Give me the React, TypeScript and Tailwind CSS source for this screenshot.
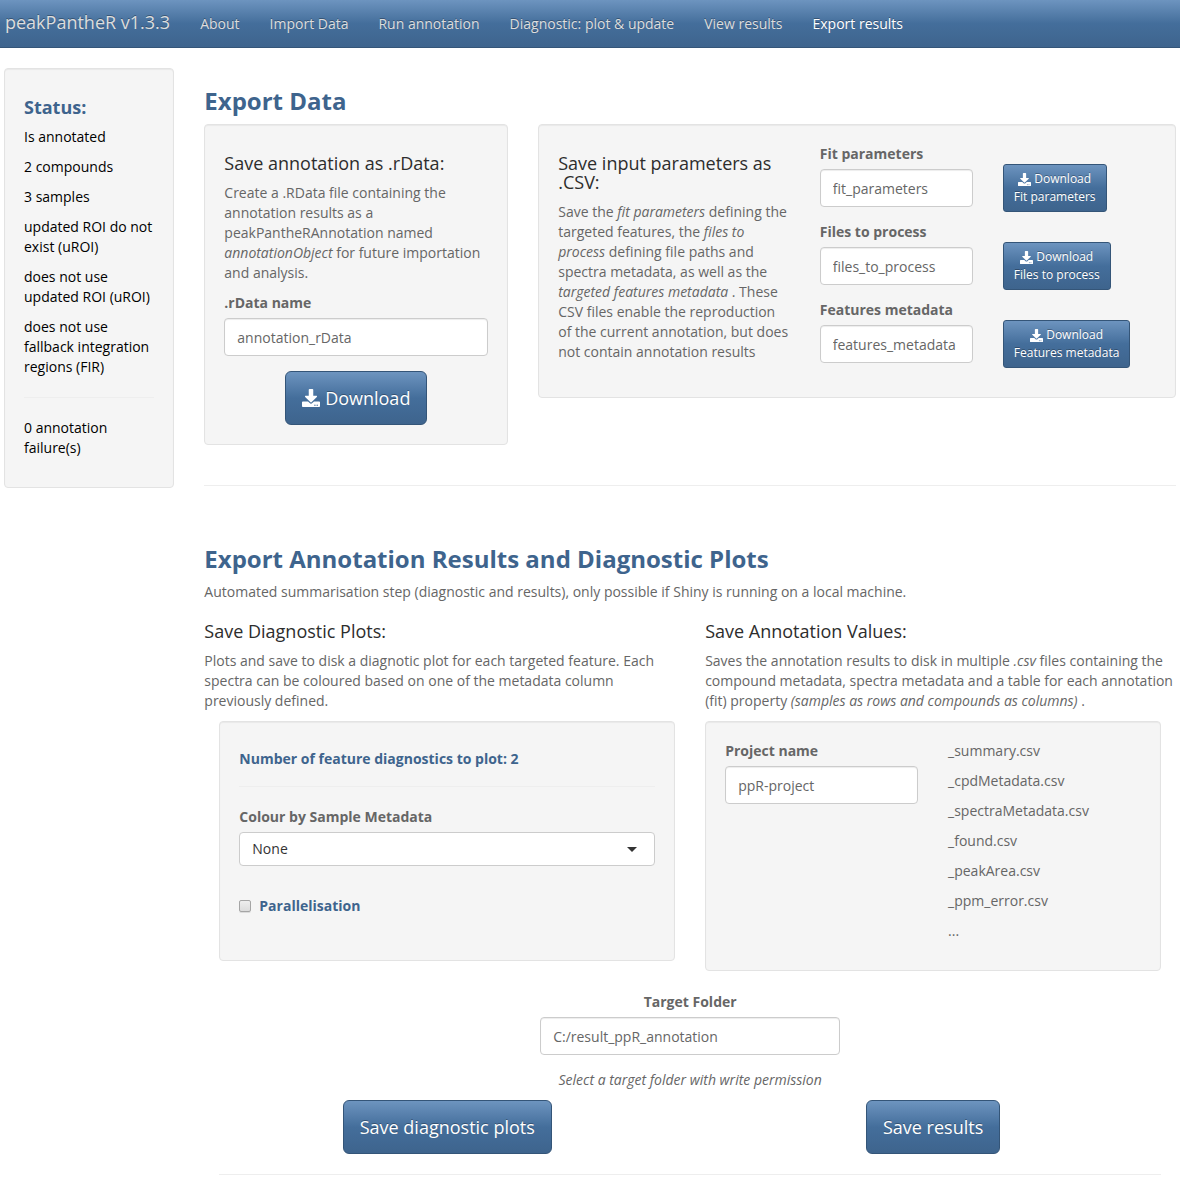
import { useId, type ReactNode } from "react";
import { FaDownload } from "react-icons/fa";

const gradient =
  "bg-[linear-gradient(#6d94bf,#446e9b_50%,#3e648d)] [text-shadow:0_-1px_0_rgba(0,0,0,0.3)]";

const navItems = [
  "About",
  "Import Data",
  "Run annotation",
  "Diagnostic: plot & update",
  "View results",
  "Export results",
];

const statusItems = [
  "Is annotated",
  "2 compounds",
  "3 samples",
  "updated ROI do not exist (uROI)",
  "does not use updated ROI (uROI)",
  "does not use fallback integration regions (FIR)",
];

const csvFields = [
  { label: "Fit parameters", value: "fit_parameters" },
  { label: "Files to process", value: "files_to_process" },
  { label: "Features metadata", value: "features_metadata" },
];

const outputFiles = [
  "_summary.csv",
  "_cpdMetadata.csv",
  "_spectraMetadata.csv",
  "_found.csv",
  "_peakArea.csv",
  "_ppm_error.csv",
  "...",
];

function Well({ className = "", children }: { className?: string; children: ReactNode }) {
  return (
    <div
      className={`rounded border border-[#e3e3e3] bg-[#f5f5f5] p-[19px] shadow-[inset_0_1px_1px_rgba(0,0,0,0.05)] ${className}`}
    >
      {children}
    </div>
  );
}

function SectionTitle({ children }: { children: ReactNode }) {
  return <h2 className="mb-2.5 text-2xl leading-[26px] font-bold text-[#3e648d]">{children}</h2>;
}

function SubTitle({ children }: { children: ReactNode }) {
  return <h4 className="my-2.5 text-lg leading-[19px] text-[#2d2d2d]">{children}</h4>;
}

function TextField({ label, value, className = "" }: { label: string; value: string; className?: string }) {
  const id = useId();
  return (
    <div className={`mb-[15px] ${className}`}>
      <label htmlFor={id} className="mb-[5px] block font-bold">
        {label}
      </label>
      <input
        id={id}
        type="text"
        defaultValue={value}
        className="block h-[38px] w-full rounded border border-[#cccccc] bg-white px-3 text-left text-[#666666] shadow-[inset_0_1px_1px_rgba(0,0,0,0.075)]"
      />
    </div>
  );
}

function LargeButton({ children }: { children: ReactNode }) {
  return (
    <button
      type="button"
      className={`rounded-md border border-[#345578] px-4 py-3.5 text-lg leading-6 text-white ${gradient}`}
    >
      {children}
    </button>
  );
}

export default function App() {
  return (
    <div className="min-h-screen bg-white pb-2.5 font-['Open_Sans',sans-serif] text-sm leading-5 text-[#666666]">
      <nav className={`flex h-12 items-baseline border-b border-[#345578] pl-[5px] text-[#dddddd] ${gradient}`}>
        <a href="#home" className="mr-[15px] text-lg leading-5 whitespace-nowrap">
          peakPantheR v1.3.3
        </a>
        <ul className="flex">
          {navItems.map((item) => (
            <li key={item}>
              <a
                href="#tab"
                className={`block px-[15px] pt-3.5 pb-3 whitespace-nowrap ${item === "Export results" ? "text-white" : ""}`}
              >
                {item}
              </a>
            </li>
          ))}
        </ul>
      </nav>

      <div className="mt-5 grid grid-cols-12 items-start gap-x-[30px] px-1">
        <aside className="col-span-2">
          <Well className="text-black">
            <h4 className="my-2.5 text-lg leading-[19px] font-bold text-[#3e648d]">Status:</h4>
            {statusItems.map((item) => (
              <p key={item} className="mb-2.5">
                {item}
              </p>
            ))}
            <hr className="my-5 border-[#eeeeee]" />
            <p className="mb-2.5">0 annotation failure(s)</p>
          </Well>
        </aside>

        <main className="col-span-10 pt-5">
          <SectionTitle>Export Data</SectionTitle>
          <div className="grid grid-cols-12 items-start gap-x-[30px]">
            <Well className="col-span-4">
              <SubTitle>Save annotation as .rData:</SubTitle>
              <p className="mb-2.5">
                Create a .RData file containing the annotation results as a peakPantheRAnnotation named{" "}
                <em>annotationObject</em> for future importation and analysis.
              </p>
              <TextField label=".rData name" value="annotation_rData" />
              <div className="flex justify-center">
                <LargeButton>
                  <span className="flex items-center gap-[5px]">
                    <FaDownload className="size-[18px]" />
                    Download
                  </span>
                </LargeButton>
              </div>
            </Well>

            <Well className="col-span-8">
              <div className="grid grid-cols-12 gap-x-[30px]">
                <div className="col-span-5">
                  <SubTitle>Save input parameters as .CSV:</SubTitle>
                  <p>
                    Save the <em>fit parameters</em> defining the targeted features, the <em>files to process</em>{" "}
                    defining file paths and spectra metadata, as well as the <em>targeted features metadata</em> . These
                    CSV files enable the reproduction of the current annotation, but does not contain annotation results
                  </p>
                </div>
                <div className="col-span-7">
                  {csvFields.map((field) => (
                    <div key={field.value} className="grid grid-cols-2 items-start gap-x-[30px]">
                      <TextField label={field.label} value={field.value} />
                      <button
                        type="button"
                        className={`mt-5 justify-self-start rounded-[3px] border border-[#345578] px-2.5 py-[5px] text-xs leading-[18px] whitespace-nowrap text-white ${gradient}`}
                      >
                        <span className="flex items-center justify-center gap-[3px]">
                          <FaDownload className="size-[13px]" />
                          Download
                        </span>
                        <span className="block">{field.label}</span>
                      </button>
                    </div>
                  ))}
                </div>
              </div>
            </Well>
          </div>

          <hr className="mt-10 mb-[60px] border-[#eeeeee]" />

          <SectionTitle>Export Annotation Results and Diagnostic Plots</SectionTitle>
          <p>
            Automated summarisation step (diagnostic and results), only possible if Shiny is running on a local machine.
          </p>

          <div className="mt-2.5 grid grid-cols-2 gap-x-[30px] pt-2.5">
            <div>
              <h4 className="mb-2.5 text-lg leading-[19px] text-[#2d2d2d]">Save Diagnostic Plots:</h4>
              <p className="mb-2.5">
                Plots and save to disk a diagnotic plot for each targeted feature. Each spectra can be coloured based on
                one of the metadata column previously defined.
              </p>
            </div>
            <div>
              <h4 className="mb-2.5 text-lg leading-[19px] text-[#2d2d2d]">Save Annotation Values:</h4>
              <p className="mb-2.5">
                Saves the annotation results to disk in multiple <em>.csv</em> files containing the compound metadata,
                spectra metadata and a table for each annotation (fit) property{" "}
                <em>(samples as rows and compounds as columns)</em> .
              </p>
            </div>
          </div>

          <div className="px-[15px]">
            <div className="grid grid-cols-2 items-start gap-x-[30px]">
              <Well>
                <h5 className="mt-2.5 leading-4 font-bold text-[#3e648d]">Number of feature diagnostics to plot: 2</h5>
                <hr className="mt-[19px] mb-5 border-[#eeeeee]" />
                <label htmlFor="colour-by" className="mb-[5px] block font-bold">
                  Colour by Sample Metadata
                </label>
                <div className="grid items-center">
                  <select
                    id="colour-by"
                    className="col-start-1 row-start-1 h-[34px] w-full appearance-none rounded border border-[#cccccc] bg-white px-3 text-[#333333]"
                  >
                    <option>None</option>
                  </select>
                  <svg
                    viewBox="0 0 10 5"
                    className="pointer-events-none col-start-1 row-start-1 mr-[18px] h-[5px] w-2.5 justify-self-end fill-[#333333]"
                    aria-hidden="true"
                  >
                    <path d="M0 0h10L5 5z" />
                  </svg>
                </div>
                <label className="mt-[30px] mb-[25px] flex items-center gap-2 font-bold text-[#3e648d]">
                  <input
                    type="checkbox"
                    className="size-3 appearance-none rounded-xs border border-[#a5a5a5] bg-[linear-gradient(#eeeeee,#dcdcdc)] shadow-[0_1px_0_rgba(0,0,0,0.1)] checked:bg-[#3e648d]"
                  />
                  Parallelisation
                </label>
              </Well>
              <Well>
                <div className="grid grid-cols-2 gap-x-[30px]">
                  <TextField label="Project name" value="ppR-project" />
                  <ul>
                    {outputFiles.map((file) => (
                      <li key={file} className="mb-2.5">
                        {file}
                      </li>
                    ))}
                  </ul>
                </div>
              </Well>
            </div>

            <div className="mt-[21px] flex flex-col items-center text-center">
              <TextField label="Target Folder" value="C:/result_ppR_annotation" className="w-[300px] max-w-full" />
              <p className="mb-2.5 italic">Select a target folder with write permission</p>
            </div>
            <div className="grid grid-cols-2 justify-items-center gap-x-[30px]">
              <LargeButton>Save diagnostic plots</LargeButton>
              <LargeButton>Save results</LargeButton>
            </div>
            <hr className="mt-5 border-[#eeeeee]" />
          </div>
        </main>
      </div>
    </div>
  );
}
